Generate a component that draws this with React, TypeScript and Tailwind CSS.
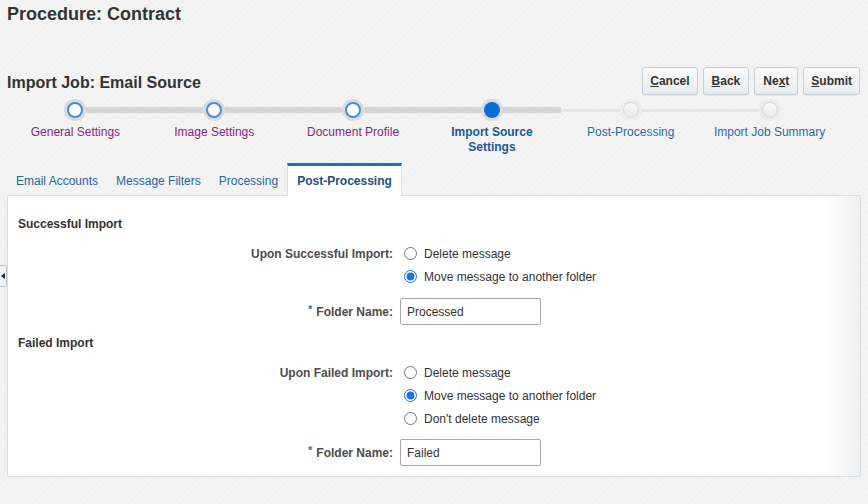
import React from "react";

type Step = { label: string; state: "done" | "current" | "todo" };

const STEPS: Step[] = [
  { label: "General Settings", state: "done" },
  { label: "Image Settings", state: "done" },
  { label: "Document Profile", state: "done" },
  { label: "Import Source Settings", state: "current" },
  { label: "Post-Processing", state: "todo" },
  { label: "Import Job Summary", state: "todo" },
];

const CURRENT = 3;

const TABS = ["Email Accounts", "Message Filters", "Processing", "Post-Processing"];

const btnClass =
  "h-[28px] rounded-[3px] border border-[#c5ced6] bg-gradient-to-b from-[#fafafa] to-[#e9ecee] text-[12px] font-bold text-[#333] shadow-[0_1px_0_rgba(0,0,0,0.04)]";

function Dot({ state }: { state: Step["state"] }) {
  if (state === "todo") {
    return (
      <div className="flex h-[22px] w-[22px] shrink-0 items-center justify-center rounded-full bg-[#ececec]">
        <div className="h-[16px] w-[16px] rounded-full border border-[#d3d8dd] bg-gradient-to-b from-[#f7f8f9] to-[#e6e9ec]" />
      </div>
    );
  }
  return (
    <div className="flex h-[22px] w-[22px] shrink-0 items-center justify-center rounded-full bg-[#dadada]">
      {state === "current" ? (
        <div className="h-[16px] w-[16px] rounded-full bg-[#0a6fd3]" />
      ) : (
        <div className="h-[16px] w-[16px] rounded-full border-2 border-[#3e8ee0] bg-white" />
      )}
    </div>
  );
}

function Train() {
  return (
    <div className="ml-[6px] mt-[4px] grid w-[833px] grid-cols-6">
      {STEPS.map((step, i) => {
        const dark = i <= CURRENT;
        const labelColor =
          step.state === "done"
            ? "text-[#7e2a89]"
            : step.state === "current"
              ? "font-bold text-[#1d5796]"
              : "text-[#2f6aa8]";
        return (
          <div key={step.label} className="flex flex-col items-center">
            <div className="flex w-full items-center">
              <div
                className={
                  i === 0 ? "flex-1" : dark ? "h-[6px] flex-1 bg-[#d5d5d5]" : "h-[3px] flex-1 bg-[#e6e6e6]"
                }
              />
              <Dot state={step.state} />
              <div
                className={
                  i === STEPS.length - 1
                    ? "flex-1"
                    : dark
                      ? "h-[6px] flex-1 bg-[#d5d5d5]"
                      : "h-[3px] flex-1 bg-[#e6e6e6]"
                }
              />
            </div>
            <div className={`mt-[4px] w-[120px] text-center text-[12px] leading-[15px] ${labelColor}`}>
              {step.label}
            </div>
          </div>
        );
      })}
    </div>
  );
}

function Radio({ group, checked, label }: { group: string; checked?: boolean; label: string }) {
  return (
    <label className="flex h-[23px] items-center gap-[7px] text-[12px] text-[#333]">
      <input
        type="radio"
        defaultChecked={checked}
        name={group}
        className="m-0 ml-[4px] h-[13px] w-[13px] accent-[#1a73e8]"
      />
      {label}
    </label>
  );
}

function FolderRow({ value }: { value: string }) {
  return (
    <div className="grid grid-cols-[385px_1fr] items-center gap-[7px]">
      <div className="text-right text-[12px] font-bold text-[#4d4d4d]">
        <span className="relative top-[-3px] mr-[4px] text-[11px] text-[#1f6fbf]">*</span>
        Folder Name:
      </div>
      <input
        readOnly
        value={value}
        className="h-[27px] w-[141px] rounded-[2px] border border-[#a8a8a8] bg-white px-[6px] text-[12px] text-[#333] outline-none"
      />
    </div>
  );
}

export default function App() {
  return (
    <div
      className="relative h-[504px] w-[868px] overflow-hidden bg-[#f3f3f3] bg-[repeating-linear-gradient(135deg,#f4f4f4_0px,#f4f4f4_2px,#f1f1f1_2px,#f1f1f1_4px)] text-[#333]"
      style={{ fontFamily: '"Liberation Sans", Arial, Helvetica, sans-serif' }}
    >
      <h1 className="m-0 ml-[7px] pt-[3px] text-[18px] font-bold leading-[22px] text-[#333]">
        Procedure: Contract
      </h1>

      <div className="mt-[42px] flex items-center justify-between pl-[7px] pr-[8px]">
        <h2 className="m-0 mt-[4px] text-[16px] font-bold leading-[20px] text-[#333]">Import Job: Email Source</h2>
        <div className="flex gap-[5px]">
          <button type="button" className={`${btnClass} px-[7px]`}>
            <span className="underline">C</span>ancel
          </button>
          <button type="button" className={`${btnClass} px-[8px]`}>
            <span className="underline">B</span>ack
          </button>
          <button type="button" className={`${btnClass} px-[8px]`}>
            Ne<span className="underline">x</span>t
          </button>
          <button type="button" className={`${btnClass} px-[7px]`}>
            <span className="underline">S</span>ubmit
          </button>
        </div>
      </div>

      <Train />

      <div className="ml-[7px] mt-[8px] flex h-[32px] items-stretch">
        {TABS.map((tab, i) =>
          i === TABS.length - 1 ? (
            <div
              key={tab}
              className="relative z-10 -mb-px flex items-center border-x border-t-[3px] border-x-[#d6dee5] border-t-[#0b73d0] bg-white px-[9px] text-[12px] font-bold text-[#23507d]"
            >
              {tab}
            </div>
          ) : (
            <div key={tab} className="flex items-center px-[9px] pt-[3px] text-[12px] text-[#2766a3]">
              {tab}
            </div>
          ),
        )}
      </div>

      <div className="mx-[7px] h-[282px] rounded-[2px] border border-[#d6dee5] bg-gradient-to-r from-white from-[96%] to-[#efefef] pl-[10px] pt-[20px]">
        <div className="text-[12px] font-bold leading-[16px] text-[#333]">Successful Import</div>

        <div className="mt-[10px] grid grid-cols-[375px_1fr] gap-[7px]">
          <div className="flex h-[23px] items-center justify-end text-[12px] font-bold text-[#4d4d4d]">
            Upon Successful Import:
          </div>
          <div className="flex flex-col">
            <Radio group="success" label="Delete message" />
            <Radio group="success" label="Move message to another folder" checked />
          </div>
        </div>

        <div className="-ml-[10px] mt-[10px]">
          <FolderRow value="Processed" />
        </div>

        <div className="mt-[10px] text-[12px] font-bold leading-[16px] text-[#333]">Failed Import</div>

        <div className="mt-[10px] grid grid-cols-[375px_1fr] gap-[7px]">
          <div className="flex h-[23px] items-center justify-end text-[12px] font-bold text-[#4d4d4d]">
            Upon Failed Import:
          </div>
          <div className="flex flex-col">
            <Radio group="failed" label="Delete message" />
            <Radio group="failed" label="Move message to another folder" checked />
            <Radio group="failed" label="Don't delete message" />
          </div>
        </div>

        <div className="-ml-[10px] mt-[9px]">
          <FolderRow value="Failed" />
        </div>
      </div>

      {/* collapsed side panel handle */}
      <div className="absolute left-0 top-[265px] flex h-[22px] w-[7px] items-center justify-center rounded-r-[2px] border border-l-0 border-[#b9c6d2] bg-[#eef1f4]">
        <div className="h-0 w-0 border-y-[3px] border-r-[4px] border-y-transparent border-r-[#222]" />
      </div>
    </div>
  );
}
